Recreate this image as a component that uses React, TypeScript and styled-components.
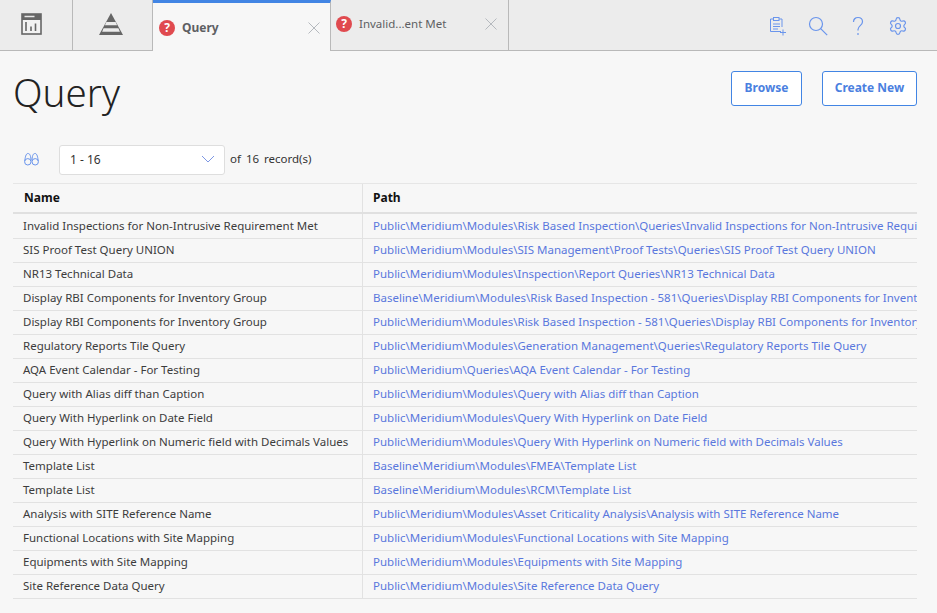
import styled, { createGlobalStyle } from "styled-components";
import { Settings } from "lucide-react";

const GlobalStyle = createGlobalStyle`
  html, body {
    margin: 0;
    padding: 0;
    background: #f7f7f7;
    font-family: "Noto Sans", "Liberation Sans", sans-serif;
    overflow: hidden;
  }
`;

const rows = [
  ["Invalid Inspections for Non-Intrusive Requirement Met", "Public\\Meridium\\Modules\\Risk Based Inspection\\Queries\\Invalid Inspections for Non-Intrusive Requirement Met"],
  ["SIS Proof Test Query UNION", "Public\\Meridium\\Modules\\SIS Management\\Proof Tests\\Queries\\SIS Proof Test Query UNION"],
  ["NR13 Technical Data", "Public\\Meridium\\Modules\\Inspection\\Report Queries\\NR13 Technical Data"],
  ["Display RBI Components for Inventory Group", "Baseline\\Meridium\\Modules\\Risk Based Inspection - 581\\Queries\\Display RBI Components for Inventory Group"],
  ["Display RBI Components for Inventory Group", "Public\\Meridium\\Modules\\Risk Based Inspection - 581\\Queries\\Display RBI Components for Inventory Group"],
  ["Regulatory Reports Tile Query", "Public\\Meridium\\Modules\\Generation Management\\Queries\\Regulatory Reports Tile Query"],
  ["AQA Event Calendar - For Testing", "Public\\Meridium\\Queries\\AQA Event Calendar - For Testing"],
  ["Query with Alias diff than Caption", "Public\\Meridium\\Modules\\Query with Alias diff than Caption"],
  ["Query With Hyperlink on Date Field", "Public\\Meridium\\Modules\\Query With Hyperlink on Date Field"],
  ["Query With Hyperlink on Numeric field with Decimals Values", "Public\\Meridium\\Modules\\Query With Hyperlink on Numeric field with Decimals Values"],
  ["Template List", "Baseline\\Meridium\\Modules\\FMEA\\Template List"],
  ["Template List", "Baseline\\Meridium\\Modules\\RCM\\Template List"],
  ["Analysis with SITE Reference Name", "Public\\Meridium\\Modules\\Asset Criticality Analysis\\Analysis with SITE Reference Name"],
  ["Functional Locations with Site Mapping", "Public\\Meridium\\Modules\\Functional Locations with Site Mapping"],
  ["Equipments with Site Mapping", "Public\\Meridium\\Modules\\Equipments with Site Mapping"],
  ["Site Reference Data Query", "Public\\Meridium\\Modules\\Site Reference Data Query"],
];

const Page = styled.div`
  width: 937px;
  height: 613px;
  overflow: hidden;
  display: flex;
  flex-direction: column;
`;

const TabBar = styled.div`
  height: 50px;
  flex: none;
  display: flex;
  background: #ececec;
  border-bottom: 1px solid #b9b9b9;
`;

const IconTab = styled.div<{ $w: number; $shift: number }>`
  width: ${(p) => p.$w}px;
  flex: none;
  box-sizing: border-box;
  display: flex;
  align-items: center;
  justify-content: center;
  padding: 0 ${(p) => p.$shift}px 3px 0;
  border-right: 1px solid #b9b9b9;
`;

const Tab = styled.div<{ $active?: boolean }>`
  width: 178px;
  flex: none;
  box-sizing: border-box;
  height: ${(p) => (p.$active ? "51px" : "50px")};
  display: flex;
  align-items: center;
  gap: 7px;
  padding: ${(p) => (p.$active ? "1px 10px 0 6px" : "0 11px 3px 5px")};
  background: ${(p) => (p.$active ? "#f7f7f7" : "#ececec")};
  border-top: ${(p) => (p.$active ? "3px solid #4285e4" : "none")};
  border-right: 1px solid #b9b9b9;
  color: #5e5f63;
  font-size: ${(p) => (p.$active ? "12px" : "11.5px")};
  font-weight: ${(p) => (p.$active ? 700 : 400)};
`;

const Badge = styled.span`
  width: 16px;
  height: 16px;
  border-radius: 50%;
  background: #e04a4f;
  color: #fff;
  font-size: 12px;
  font-weight: 700;
  display: flex;
  align-items: center;
  justify-content: center;
  flex: none;
`;

const TabLabel = styled.span`
  flex: 1;
  white-space: nowrap;
`;

const Tools = styled.div`
  margin-left: auto;
  display: flex;
  align-items: center;
  padding: 2px 19px 0 0;
`;

const ToolSlot = styled.span`
  width: 40px;
  display: flex;
  justify-content: center;
  color: #6a95ec;
`;

const Content = styled.div`
  flex: 1;
  padding: 0 20px 0 13px;
`;

const TitleRow = styled.div`
  height: 94px;
  display: flex;
  justify-content: space-between;
`;

const Title = styled.h1`
  margin: 12px 0 0 0;
  font-size: 38.5px;
  line-height: 58px;
  font-weight: 300;
  color: #222;
`;

const Buttons = styled.div`
  display: flex;
  gap: 20px;
  padding-top: 20px;
`;

const ActionButton = styled.button<{ $w: number }>`
  width: ${(p) => p.$w}px;
  height: 35px;
  box-sizing: border-box;
  background: #fff;
  border: 1px solid #4285e4;
  border-radius: 3px;
  color: #4a80e0;
  font-family: inherit;
  font-size: 12px;
  font-weight: 700;
  padding: 0 0 2px;
`;

const Pager = styled.div`
  height: 38px;
  display: flex;
  align-items: flex-start;
  padding-left: 11px;
`;

const Select = styled.div`
  width: 166px;
  height: 30px;
  margin: 0 5px 0 20px;
  box-sizing: border-box;
  background: #fff;
  border: 1px solid #dedede;
  border-radius: 3px;
  display: flex;
  align-items: center;
  justify-content: space-between;
  padding: 0 9px 2px 10px;
  font-size: 12px;
  color: #333;
`;

const PagerText = styled.span`
  font-size: 11.5px;
  line-height: 28px;
  color: #333;
  word-spacing: 2px;
`;

const BinocularSlot = styled.span`
  padding-top: 7px;
  display: flex;
`;

const Table = styled.div`
  width: 904px;
  overflow: hidden;
  background: linear-gradient(#e2e2e2, #e2e2e2) 349px 0 / 1px 100% no-repeat;
`;

const HeadRow = styled.div`
  display: grid;
  grid-template-columns: 350px 554px;
  height: 31px;
  margin-bottom: 1px;
  box-sizing: border-box;
  border-top: 1px solid #e6e6e6;
  border-bottom: 2px solid #e0e0e0;
`;

const HeadCell = styled.div<{ $pad: number }>`
  display: flex;
  align-items: center;
  padding: 0 0 2px ${(p) => p.$pad}px;
  font-size: 12px;
  font-weight: 700;
  color: #111;
`;

const Row = styled.div`
  display: grid;
  grid-template-columns: 350px 554px;
  height: 24px;
  box-sizing: border-box;
  border-bottom: 1px solid #e2e2e2;
`;

const NameCell = styled.div`
  display: flex;
  align-items: center;
  padding: 0 0 3px 10px;
  font-size: 11.5px;
  color: #3c3c3c;
  white-space: nowrap;
`;

const PathCell = styled.div`
  display: flex;
  align-items: center;
  padding: 0 0 3px 10px;
  font-size: 11.5px;
  color: #5a77dd;
  white-space: nowrap;
  overflow: hidden;
`;

const Ico = styled.svg`
  display: block;
  fill: none;
`;

const App = () => (
  <Page>
    <GlobalStyle />
    <TabBar>
      <IconTab $w={73} $shift={10}>
        <Ico width="21" height="22" viewBox="0 0 21 22" stroke="#666">
          <rect x="1" y="1" width="19" height="20" strokeWidth="1.6" fill="#f2f2f2" />
          <path d="M1 4h19" strokeWidth="6" />
          <path d="M3.500 3.500h10" stroke="#e8e8e8" strokeWidth="1.5" />
          <path d="M5 18v-9M10 18v-4.500M14.500 18v-7.500" strokeWidth="1.6" />
        </Ico>
      </IconTab>
      <IconTab $w={80} $shift={4}>
        <Ico width="24" height="22" viewBox="0 0 24 22">
          <path d="M12 0L24 22H0z" fill="#666" />
          <path d="M7.400 9h9.200l1.500 3.200H5.900z" fill="#ececec" />
          <path d="M4.600 15.300h14.800l1.500 3.400H3.100z" fill="#ececec" />
        </Ico>
      </IconTab>
      <Tab $active>
        <Badge>?</Badge>
        <TabLabel>Query</TabLabel>
        <Ico width="12" height="12" viewBox="0 0 12 12" stroke="#b5b9be">
          <path d="M.5.5l11 11M11.500.5l-11 11" />
        </Ico>
      </Tab>
      <Tab>
        <Badge>?</Badge>
        <TabLabel>Invalid...ent Met</TabLabel>
        <Ico width="12" height="12" viewBox="0 0 12 12" stroke="#b5b9be">
          <path d="M.5.5l11 11M11.500.5l-11 11" />
        </Ico>
      </Tab>
      <Tools>
        <ToolSlot>
          <Ico width="18" height="20" viewBox="0 0 18 20" stroke="#6a95ec">
            <path d="M12 15.500H1.500V3h3M10 3h3v8" />
            <rect x="4.500" y="1.500" width="5.500" height="3" />
            <path d="M4 8h7M4 10.500h7M4 13h5M14 13.500v6M11 16.500h6" />
          </Ico>
        </ToolSlot>
        <ToolSlot>
          <Ico width="20" height="20" viewBox="0 0 20 20" stroke="#6a95ec" strokeWidth="1.200">
            <circle cx="8" cy="8" r="6.500" />
            <path d="M12.700 12.700l6.500 6.500" />
          </Ico>
        </ToolSlot>
        <ToolSlot>
          <Ico width="20" height="20" viewBox="0 0 20 20" stroke="#6a95ec" strokeWidth="1.200">
            <path d="M5.500 6c0-2.800 2-4.500 4.500-4.500s4.500 1.700 4.500 4.300c0 3.700-4.500 4-4.500 7.700v1" />
            <path d="M10 17v2" />
          </Ico>
        </ToolSlot>
        <ToolSlot>
          <Settings size={20} strokeWidth={1.4} />
        </ToolSlot>
      </Tools>
    </TabBar>
    <Content>
      <TitleRow>
        <Title>Query</Title>
        <Buttons>
          <ActionButton $w={71}>Browse</ActionButton>
          <ActionButton $w={95}>Create New</ActionButton>
        </Buttons>
      </TitleRow>
      <Pager>
        <BinocularSlot>
          <Ico width="15" height="14" viewBox="0 0 15 14" stroke="#6a95ec">
            <circle cx="3.800" cy="9.800" r="3.200" />
            <circle cx="11.200" cy="9.800" r="3.200" />
            <path d="M.8 9c.3-3 1-7.500 3-7.500S6.500 3 7 7.500M14.200 9c-.3-3-1-7.500-3-7.500S8.500 3 8 7.500M6.500 8h2" />
          </Ico>
        </BinocularSlot>
        <Select>
          1 - 16
          <Ico width="14" height="8" viewBox="0 0 14 8" stroke="#7d97e4">
            <path d="M1 1l6 6 6-6" />
          </Ico>
        </Select>
        <PagerText>of 16 record(s)</PagerText>
      </Pager>
      <Table>
        <HeadRow>
          <HeadCell $pad={11}>Name</HeadCell>
          <HeadCell $pad={10}>Path</HeadCell>
        </HeadRow>
        {rows.map((r, i) => (
          <Row key={i}>
            <NameCell>{r[0]}</NameCell>
            <PathCell>{r[1]}</PathCell>
          </Row>
        ))}
      </Table>
    </Content>
  </Page>
);

export default App;
